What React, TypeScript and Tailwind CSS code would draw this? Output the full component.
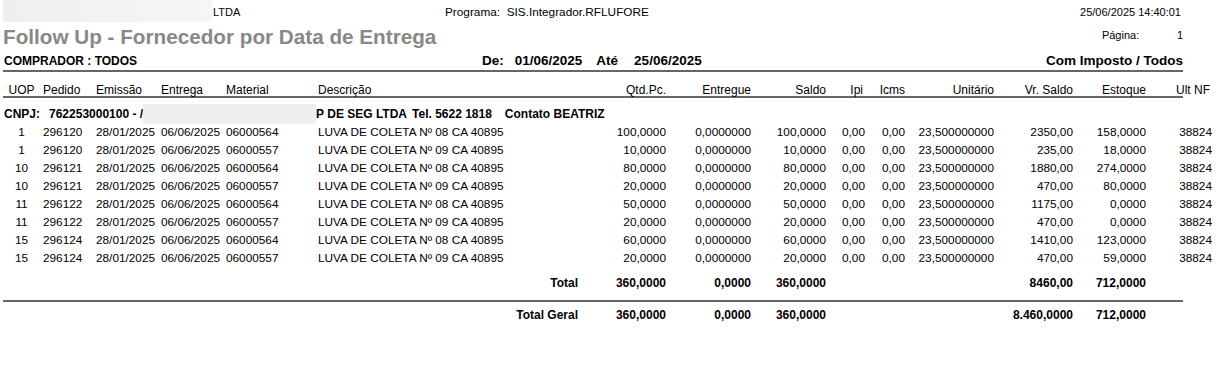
import React from "react";

const cols =
  "grid grid-cols-[43px_53px_65px_65px_92px_262px_86px_85px_75px_39px_40px_89px_79px_73px_66px]";

type Row = string[];

const rows: Row[] = [
  ["1", "296120", "28/01/2025", "06/06/2025", "06000564", "LUVA DE COLETA Nº 08 CA 40895", "100,0000", "100,0000", "2350,00", "158,0000"],
  ["1", "296120", "28/01/2025", "06/06/2025", "06000557", "LUVA DE COLETA Nº 09 CA 40895", "10,0000", "10,0000", "235,00", "18,0000"],
  ["10", "296121", "28/01/2025", "06/06/2025", "06000564", "LUVA DE COLETA Nº 08 CA 40895", "80,0000", "80,0000", "1880,00", "274,0000"],
  ["10", "296121", "28/01/2025", "06/06/2025", "06000557", "LUVA DE COLETA Nº 09 CA 40895", "20,0000", "20,0000", "470,00", "80,0000"],
  ["11", "296122", "28/01/2025", "06/06/2025", "06000564", "LUVA DE COLETA Nº 08 CA 40895", "50,0000", "50,0000", "1175,00", "0,0000"],
  ["11", "296122", "28/01/2025", "06/06/2025", "06000557", "LUVA DE COLETA Nº 09 CA 40895", "20,0000", "20,0000", "470,00", "0,0000"],
  ["15", "296124", "28/01/2025", "06/06/2025", "06000564", "LUVA DE COLETA Nº 08 CA 40895", "60,0000", "60,0000", "1410,00", "123,0000"],
  ["15", "296124", "28/01/2025", "06/06/2025", "06000557", "LUVA DE COLETA Nº 09 CA 40895", "20,0000", "20,0000", "470,00", "59,0000"],
];

function Line() {
  return <div className="ml-[3px] w-[1180px] h-[2px] bg-[#666666]" />;
}

function TotalRow({ label, vr }: { label: string; vr: string }) {
  return (
    <div className={`${cols} h-[18px] items-center font-bold whitespace-nowrap`}>
      <div className="col-span-6 text-right pr-[2px]">{label}</div>
      <div className="text-right">360,0000</div>
      <div className="text-right">0,0000</div>
      <div className="text-right">360,0000</div>
      <div />
      <div />
      <div />
      <div className="text-right">{vr}</div>
      <div className="text-right">712,0000</div>
      <div />
    </div>
  );
}

export default function App() {
  return (
    <div className="w-[1225px] h-[370px] bg-white text-black font-['Liberation_Sans',Arial,sans-serif] text-[12px] leading-[14px] overflow-hidden">
      {/* Row 1 */}
      <div className="flex h-[23px] items-center whitespace-nowrap">
        <div className="ml-[3px] w-[209px] h-[22px] self-start bg-gradient-to-r from-[#efefef] to-[#f6f6f6]" />
        <div className="ml-[1px] w-[232px] text-[11px]">LTDA</div>
        <div className="text-[11.8px]">Programa:&nbsp;&nbsp;SIS.Integrador.RFLUFORE</div>
        <div className="flex-1" />
        <div className="mr-[44px] text-[11px]">25/06/2025 14:40:01</div>
      </div>
      {/* Row 2 */}
      <div className="flex h-[25px] items-start whitespace-nowrap">
        <div className="ml-[3px] mt-[1.5px] text-[20.7px] leading-[24px] font-bold text-[#888888]">
          Follow Up - Fornecedor por Data de Entrega
        </div>
        <div className="flex-1" />
        <div className="mt-[5px] w-[75px] text-[11px]">Página:</div>
        <div className="mt-[5px] mr-[42px] text-[11px]">1</div>
      </div>
      {/* Row 3 */}
      <div className="flex h-[22px] pt-[3px] items-center whitespace-nowrap font-bold">
        <div className="ml-[4px] w-[478px] text-[12px]">COMPRADOR : TODOS</div>
        <div className="text-[13.5px]">De:</div>
        <div className="ml-[11px] text-[13.5px]">01/06/2025</div>
        <div className="ml-[14px] text-[13.5px]">Até</div>
        <div className="ml-[16px] text-[13.5px]">25/06/2025</div>
        <div className="flex-1" />
        <div className="mr-[42px] text-[13.5px]">Com Imposto / Todos</div>
      </div>
      <Line />
      {/* Header */}
      <div className={`${cols} h-[24px] pt-[11px] items-center whitespace-nowrap`}>
        <div className="text-center">UOP</div>
        <div>Pedido</div>
        <div>Emissão</div>
        <div>Entrega</div>
        <div>Material</div>
        <div>Descrição</div>
        <div className="text-right">Qtd.Pc.</div>
        <div className="text-right">Entregue</div>
        <div className="text-right">Saldo</div>
        <div className="text-right pr-[2px]">Ipi</div>
        <div className="text-right">Icms</div>
        <div className="text-right">Unitário</div>
        <div className="text-right">Vr. Saldo</div>
        <div className="text-right">Estoque</div>
        <div className="text-right pr-[2px]">Ult NF</div>
      </div>
      <Line />
      {/* CNPJ */}
      <div className="flex h-[25px] pt-[6px] items-center whitespace-nowrap font-bold">
        <span className="pl-[4px]">CNPJ:</span>
        <span className="ml-[9px]">762253000100 - /</span>
        <div className="w-[173px] h-[20px] bg-[#efefef]" />
        <span>P DE SEG LTDA</span>
        <span className="ml-[5px]">Tel. 5622 1818</span>
        <span className="ml-[13px]">Contato BEATRIZ</span>
      </div>
      {/* Data rows */}
      {rows.map((r, i) => (
        <div key={i} className={`${cols} h-[18px] items-center whitespace-nowrap text-[11.8px]`}>
          <div className="text-center">{r[0]}</div>
          <div>{r[1]}</div>
          <div>{r[2]}</div>
          <div>{r[3]}</div>
          <div>{r[4]}</div>
          <div>{r[5]}</div>
          <div className="text-right">{r[6]}</div>
          <div className="text-right">0,0000000</div>
          <div className="text-right">{r[7]}</div>
          <div className="text-right">0,00</div>
          <div className="text-right">0,00</div>
          <div className="text-right">23,500000000</div>
          <div className="text-right">{r[8]}</div>
          <div className="text-right">{r[9]}</div>
          <div className="text-right">38824</div>
        </div>
      ))}
      <div className="mt-[7px]">
        <TotalRow label="Total" vr="8460,00" />
      </div>
      <div className="mt-[8px]">
        <Line />
      </div>
      <div className="mt-[4px]">
        <TotalRow label="Total Geral" vr="8.460,0000" />
      </div>
    </div>
  );
}
